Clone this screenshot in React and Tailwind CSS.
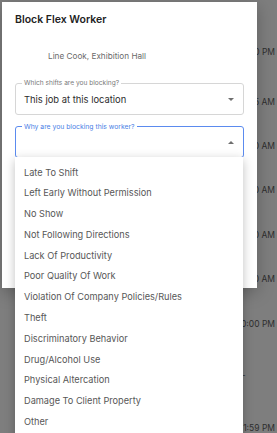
const times = [
  { t: '12:00 PM', mt: 'mt-[46px]' },
  { t: '6:45 AM', mt: 'mt-[38px]' },
  { t: '7:00 AM', mt: 'mt-[32px]' },
  { t: '7:00 AM', mt: 'mt-[32px]' },
  { t: '7:00 AM', mt: 'mt-[33px]' },
  { t: '7:00 AM', mt: 'mt-[32px]' },
  { t: '10:00 PM', mt: 'mt-[33px]' },
  { t: '–', mt: 'mt-[39px]', dash: true },
  { t: '11:59 PM', mt: 'mt-[41px]' },
]

const reasons = [
  'Late To Shift',
  'Left Early Without Permission',
  'No Show',
  'Not Following Directions',
  'Lack Of Productivity',
  'Poor Quality Of Work',
  'Violation Of Company Policies/Rules',
  'Theft',
  'Discriminatory Behavior',
  'Drug/Alcohol Use',
  'Physical Altercation',
  'Damage To Client Property',
  'Other',
]

function Caret({ up }) {
  return (
    <svg width="6" height="3" viewBox="0 0 6 3" className="shrink-0">
      {up
        ? <path d="M0 3 L3 0 L6 3 Z" fill="#6f6f6f" />
        : <path d="M0 0 L3 3 L6 0 Z" fill="#6f6f6f" />}
    </svg>
  )
}

export default function App() {
  return (
    <div className="relative w-[277px] h-[433px] overflow-hidden bg-[#7e7e7e] font-['Inter',sans-serif]">
      {/* page behind the overlay */}
      <div className="flex flex-col items-end pr-[2px] text-[8.5px] leading-[12px] text-[#2e2e2e]">
        {times.map((r, i) => (
          <div key={i} className={`${r.mt} ${r.dash ? 'pr-[30px]' : ''}`}>{r.t}</div>
        ))}
      </div>

      {/* dialog */}
      <div className="absolute left-[2px] top-[2px] w-[255px] h-[286px] bg-white shadow-[0_4px_16px_rgba(0,0,0,0.25)]">
        <div className="px-[13px] pt-[11px]">
          <h1 className="text-[10.5px] leading-[13px] font-semibold text-[#222]">Block Flex Worker</h1>
          <div className="mt-[24px] pl-[33px] text-[8.2px] leading-[12px] text-[#6a6a6a]">Line Cook, Exhibition Hall</div>

          <div className="relative mt-[21px] h-[32px] rounded-[3px] border border-[#d6d6d6] flex items-center justify-between pl-[8px] pr-[9px]">
            <span className="absolute -top-[5px] left-[6px] bg-white px-[2px] text-[6.6px] leading-[9px] text-[#7a7a7a]">Which shifts are you blocking?</span>
            <span className="text-[9.4px] leading-[14px] text-[#2c2c2c] pt-[1px]">This job at this location</span>
            <Caret />
          </div>

          <div className="relative mt-[11px] h-[32px] rounded-[3px] border-[1.5px] border-[#5b8bef] flex items-center justify-end pr-[9px]">
            <span className="absolute -top-[5px] left-[6px] bg-white px-[2px] text-[6.8px] leading-[9px] text-[#4b7fe6]">Why are you blocking this worker?</span>
            <Caret up />
          </div>
        </div>
      </div>

      {/* open select menu */}
      <ul className="absolute left-[15px] top-[157px] w-[228px] h-[290px] bg-white pt-[5px] shadow-[0_3px_10px_rgba(0,0,0,0.25)]">
        {reasons.map(r => (
          <li key={r} className="h-[20.8px] flex items-center pl-[9px] text-[9.2px] text-[#575757]">{r}</li>
        ))}
      </ul>
    </div>
  )
}
